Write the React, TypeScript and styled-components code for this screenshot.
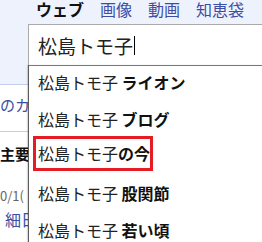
import React from 'react';
import styled, { createGlobalStyle } from 'styled-components';

const GlobalStyle = createGlobalStyle`
    html, body {
        margin: 0;
        padding: 0;
        background: #ffffff;
    }
    body {
        width: 262px;
        height: 242px;
        overflow: hidden;
        font-family: "Noto Sans CJK JP", "Liberation Sans", sans-serif;
    }
`;

const Styled = {
    Page: styled.div`
        width: 262px;
        height: 242px;
        overflow: hidden;
        display: flex;
        flex-direction: column;
    `,
    TabBar: styled.nav`
        height: 24px;
        flex-shrink: 0;
        background: #eef2fc;
        display: flex;
        align-items: flex-start;
        gap: 16px;
        padding-left: 36px;
        white-space: nowrap;
        overflow: hidden;
    `,
    Tab: styled.span<{ $active?: boolean }>`
        font-size: 16px;
        line-height: 18px;
        flex-shrink: 0;
        color: ${(p) => (p.$active ? '#111111' : '#3b4ea6')};
        font-weight: ${(p) => (p.$active ? 700 : 400)};
    `,
    Body: styled.div`
        flex: 1;
        display: flex;
        min-height: 0;
    `,
    Side: styled.aside`
        width: 28px;
        flex-shrink: 0;
        overflow: hidden;
        white-space: nowrap;
        display: flex;
        flex-direction: column;
    `,
    SideHead: styled.div`
        height: 60px;
        flex-shrink: 0;
        background: #eef2fc;
        border-bottom: 1px solid #c6cdf0;
    `,
    SideCategory: styled.div`
        height: 47px;
        flex-shrink: 0;
        box-sizing: border-box;
        padding-top: 10px;
        border-bottom: 1px solid #c6cdf0;
    `,
    SideText: styled.div<{ $tone?: 'link' | 'bold' | 'gray'; $size?: number; $indent?: number; $gap?: number }>`
        flex-shrink: 0;
        overflow: hidden;
        font-size: ${(p) => p.$size ?? 15}px;
        line-height: 20px;
        margin-top: ${(p) => p.$gap ?? 0}px;
        padding-left: ${(p) => p.$indent ?? 0}px;
        color: ${(p) => (p.$tone === 'link' ? '#3b4ea6' : p.$tone === 'gray' ? '#666666' : '#111111')};
        font-weight: ${(p) => (p.$tone === 'bold' ? 700 : 400)};
    `,
    Search: styled.div`
        flex: 1;
        display: flex;
        flex-direction: column;
        min-width: 0;
        min-height: 0;
    `,
    Input: styled.div`
        height: 40px;
        flex-shrink: 0;
        border: 1px solid #a9a9a9;
        border-bottom: none;
        border-right: none;
        display: flex;
        align-items: center;
        padding-left: 9px;
        font-size: 19px;
        color: #222222;
    `,
    Caret: styled.span`
        display: inline-block;
        width: 1px;
        height: 19px;
        background: #000000;
        margin-left: 1px;
    `,
    Dropdown: styled.ul`
        flex: 1;
        min-height: 0;
        overflow: hidden;
        list-style: none;
        margin: 0;
        padding: 0;
        background: #ffffff;
        border-top: 1px solid #777777;
        border-left: 1px solid #5c5c5c;
        box-shadow: -1px 0 1px rgba(0, 0, 0, 0.15);
    `,
    Item: styled.li`
        height: 37px;
        box-sizing: border-box;
        padding: 0 0 5px 9px;
        display: flex;
        align-items: center;
        font-size: 16px;
        color: #222222;
        white-space: nowrap;
    `,
    Suffix: styled.b`
        font-weight: 700;
        color: #111111;
    `,
    Highlight: styled.span`
        display: inline-block;
        border: 3px solid #e61c24;
        padding: 2px 0 3px 2px;
        width: 112px;
        margin-left: -5px;
        margin-bottom: 6px;
        white-space: nowrap;
    `,
};

const suggestions = [
    { gap: true, suffix: 'ライオン' },
    { gap: true, suffix: 'ブログ' },
    { gap: false, suffix: 'の今', marked: true },
    { gap: true, suffix: '股関節' },
    { gap: true, suffix: '若い頃' },
];

const App: React.FC = () => {
    const query = '松島トモ子';
    return (
        <>
            <GlobalStyle />
            <Styled.Page>
                <Styled.TabBar>
                    <Styled.Tab $active>ウェブ</Styled.Tab>
                    <Styled.Tab>画像</Styled.Tab>
                    <Styled.Tab>動画</Styled.Tab>
                    <Styled.Tab>知恵袋</Styled.Tab>
                </Styled.TabBar>
                <Styled.Body>
                    <Styled.Side>
                        <Styled.SideHead />
                        <Styled.SideCategory>
                            <Styled.SideText $tone="link">のカ</Styled.SideText>
                        </Styled.SideCategory>
                        <Styled.SideText $tone="bold" $gap={12}>主要</Styled.SideText>
                        <Styled.SideText $tone="gray" $size={13} $gap={22}>0/1(</Styled.SideText>
                        <Styled.SideText $tone="link" $size={16} $indent={5} $gap={3}>細日</Styled.SideText>
                    </Styled.Side>
                    <Styled.Search>
                        <Styled.Input>
                            {query}
                            <Styled.Caret />
                        </Styled.Input>
                        <Styled.Dropdown>
                            {suggestions.map((s) => (
                                <Styled.Item key={s.suffix}>
                                    {s.marked ? (
                                        <Styled.Highlight>
                                            {query}
                                            <Styled.Suffix>{s.suffix}</Styled.Suffix>
                                        </Styled.Highlight>
                                    ) : (
                                        <>
                                            {query}
                                            {s.gap ? '\u00a0' : ''}
                                            <Styled.Suffix>{s.suffix}</Styled.Suffix>
                                        </>
                                    )}
                                </Styled.Item>
                            ))}
                        </Styled.Dropdown>
                    </Styled.Search>
                </Styled.Body>
            </Styled.Page>
        </>
    );
};

export default App;
